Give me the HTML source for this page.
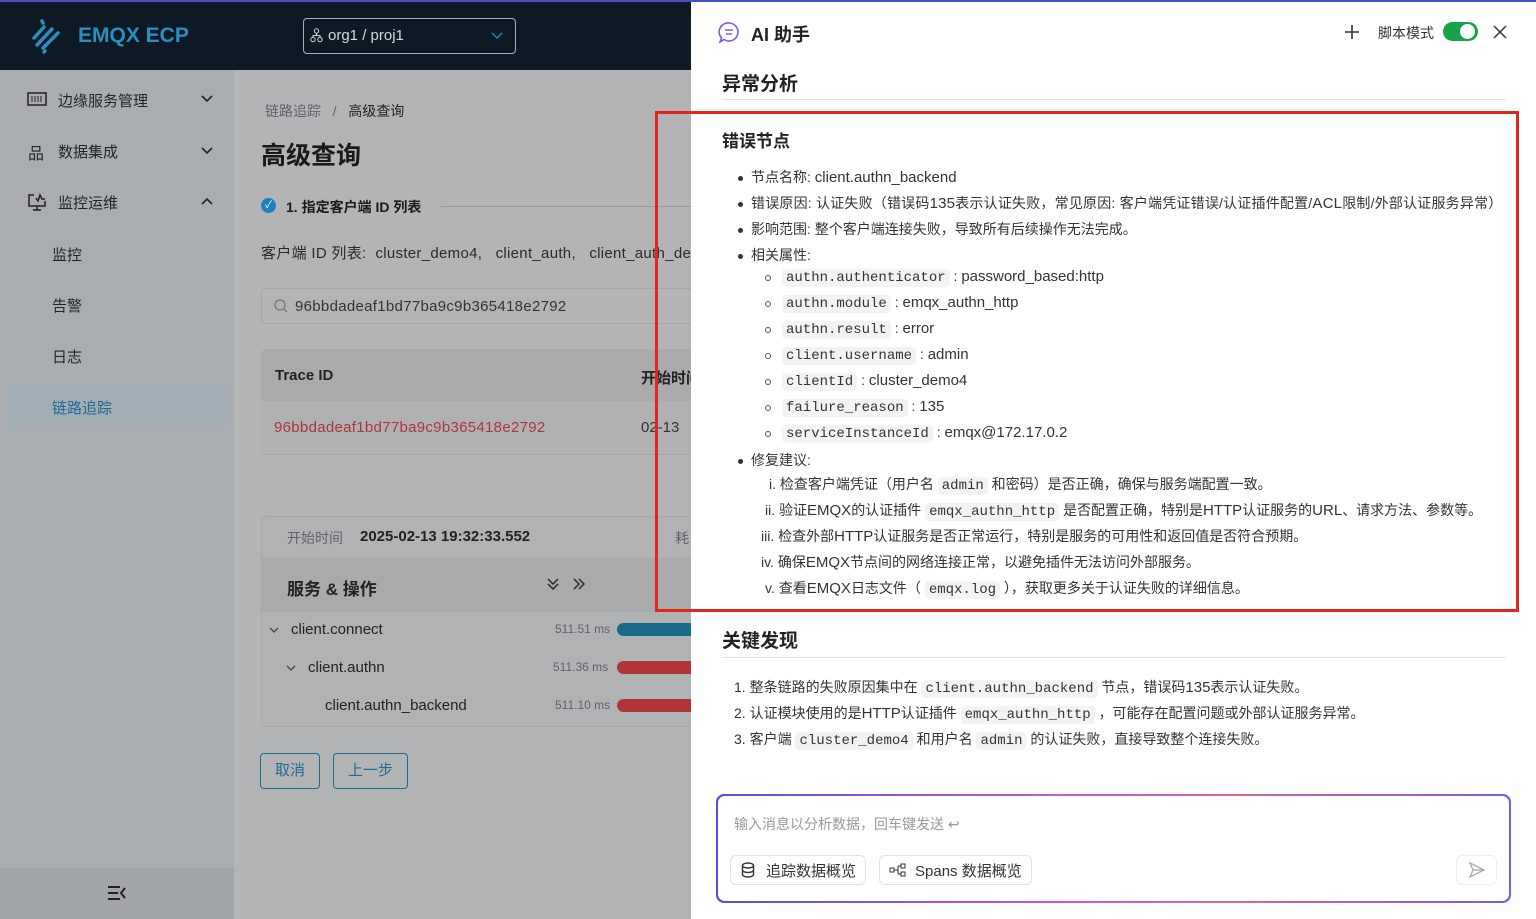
<!DOCTYPE html>
<html><head><meta charset="utf-8"><style>
*{margin:0;padding:0;box-sizing:border-box}
body{width:1536px;height:919px;overflow:hidden;position:relative;font-family:"Liberation Sans","Noto Sans CJK SC",sans-serif;background:#b3b4b6;color:#222}
.a{position:absolute;white-space:nowrap}
#topline{position:absolute;left:0;top:0;width:1536px;height:2px;background:#4a4fc4;z-index:5}
#hdr{position:absolute;left:0;top:0;width:691px;height:70px;background:#0d1a25}
#side{position:absolute;left:0;top:70px;width:234px;height:849px;background:#a9adb1}
#sidebot{position:absolute;left:0;top:868px;width:234px;height:51px;background:#a1a4a8}
.nav{font-size:15px;color:#1f2428}
.gray{color:#5f6367}
code,.c{font-family:"Liberation Mono","DejaVu Sans Mono",monospace;background:#f2f3f5;border-radius:4px;padding:1px 4px;font-size:14px;color:#333}
#panel{position:absolute;left:691px;top:0;width:845px;height:919px;background:#fff}
.t{font-size:14px;color:#333}
.l{font-size:15px}
.dot{position:absolute;width:5px;height:5px;border-radius:50%;background:#333}
.circ{position:absolute;width:6px;height:6px;border-radius:50%;border:1px solid #555}
#red{position:absolute;left:655px;top:111px;width:864px;height:501px;border:3px solid #e0261d;z-index:4}
</style></head><body>
<div id="topline"></div>
<div id="hdr">
 <svg class="a" style="left:30px;top:18px" width="34" height="36" viewBox="0 0 34 36"><g stroke="#2a8fc0" stroke-width="3.5" stroke-linecap="round"><line x1="12" y1="3" x2="13" y2="5"/><line x1="4" y1="20" x2="14" y2="9"/><line x1="7" y1="27" x2="22" y2="11"/><line x1="13" y1="30" x2="28" y2="15"/><line x1="14" y1="34" x2="15" y2="33"/></g></svg>
 <div class="a" style="left:78px;top:24px;font-size:21px;font-weight:bold;color:#2a8fc0">EMQX ECP</div>
 <div class="a" style="left:303px;top:18px;width:213px;height:36px;border:1px solid #aab;border-radius:4px"></div>
 <svg class="a" style="left:310px;top:28px" width="13" height="15"><circle cx="6.5" cy="3" r="2.2" stroke="#d5d8db" fill="none"/><circle cx="3" cy="11.5" r="2.2" stroke="#d5d8db" fill="none"/><circle cx="10" cy="11.5" r="2.2" stroke="#d5d8db" fill="none"/><path d="M6.5 5v3M3 9V7.5h7V9" stroke="#d5d8db" fill="none"/></svg>
 <div class="a" style="left:328px;top:27px;font-size:15px;color:#d5d8db">org1 / proj1</div>
 <svg class="a" style="left:491px;top:32px" width="12" height="8"><path d="M1 1 L6 6 L11 1" stroke="#2a8fc0" fill="none" stroke-width="1.3"/></svg>
</div>
<div id="side"></div><div id="sidebot"></div>
<svg class="a" style="left:27px;top:92px" width="20" height="15"><rect x="1" y="1" width="18" height="12" stroke="#222" fill="none" stroke-width="1.5"/><path d="M5 4v6M8 4v6M11 4v6M14 4v6" stroke="#222"/></svg>
<div class="a nav" style="left:58px;top:90px">边缘服务管理</div>
<div class="a nav" style="left:28px;top:140px;font-size:16px">&#x54C1;</div>
<div class="a nav" style="left:58px;top:141px">数据集成</div>
<svg class="a" style="left:27px;top:193px" width="20" height="18"><path d="M7 2H2v11h16V8M6 17h8M10 13v4M9 5l2 3 2-6 2 4h3" stroke="#222" fill="none" stroke-width="1.5"/></svg>
<div class="a nav" style="left:58px;top:192px">监控运维</div>
<svg class="a" style="left:201px;top:95px" width="12" height="8"><path d="M1 1l5 5 5-5" stroke="#222" fill="none" stroke-width="1.6"/></svg>
<svg class="a" style="left:201px;top:147px" width="12" height="8"><path d="M1 1l5 5 5-5" stroke="#222" fill="none" stroke-width="1.6"/></svg>
<svg class="a" style="left:201px;top:197px" width="12" height="8"><path d="M1 7l5-5 5 5" stroke="#222" fill="none" stroke-width="1.6"/></svg>
<div class="a nav" style="left:52px;top:244px">监控</div>
<div class="a nav" style="left:52px;top:295px">告警</div>
<div class="a nav" style="left:52px;top:346px">日志</div>
<div class="a" style="left:8px;top:383px;width:218px;height:45px;background:#a2adb5;border-radius:4px"></div>
<div class="a nav" style="left:52px;top:397px;color:#1e6c93">链路追踪</div>
<svg class="a" style="left:107px;top:885px" width="20" height="16"><path d="M1 2h12M1 8h10M1 14h12M18 3l-4 5 4 5" stroke="#222" fill="none" stroke-width="2"/></svg>

<div class="a gray" style="left:265px;top:101px;font-size:14px">链路追踪 &nbsp;&nbsp;/&nbsp;&nbsp; <span style="color:#222">高级查询</span></div>
<div class="a" style="left:261px;top:136px;font-size:25px;font-weight:bold;color:#1a1a1a">高级查询</div>
<div class="a" style="left:261px;top:198px;width:15px;height:15px;border-radius:50%;background:#1e7fbd;color:#fff;font-size:10px;text-align:center;line-height:15px">✓</div>
<div class="a" style="left:286px;top:197px;font-size:14px;font-weight:bold;color:#1a1a1a">1. 指定客户端 ID 列表</div>
<div class="a" style="left:441px;top:206px;width:250px;height:1px;background:#999"></div>
<div class="a" style="left:261px;top:242px;font-size:15px;color:#2a2a2a;letter-spacing:0.3px">客户端 ID 列表: &nbsp;cluster_demo4, &nbsp;&nbsp;client_auth, &nbsp;&nbsp;client_auth_de</div>
<div class="a" style="left:261px;top:288px;width:440px;height:36px;border:1px solid #a6a6a6;border-radius:4px;background:#b3b4b6"></div>
<svg class="a" style="left:274px;top:299px" width="14" height="14"><circle cx="6" cy="6" r="5" stroke="#777" fill="none" stroke-width="1.3"/><path d="M10 10l3 3" stroke="#777" stroke-width="1.3"/></svg>
<div class="a" style="left:295px;top:298px;font-size:15px;color:#333;letter-spacing:0.3px">96bbdadeaf1bd77ba9c9b365418e2792</div>
<div class="a" style="left:261px;top:349px;width:440px;height:52px;background:#a9aaac;border-radius:6px 0 0 0"></div>
<div class="a" style="left:261px;top:401px;width:440px;height:54px;background:#b0b1b3;border-bottom:1px solid #a5a5a5"></div>
<div class="a" style="left:275px;top:367px;font-size:15px;font-weight:bold;color:#222">Trace ID</div>
<div class="a" style="left:641px;top:367px;font-size:15px;font-weight:bold;color:#222">开始时间</div>
<div class="a" style="left:274px;top:419px;font-size:15px;color:#b0353a;letter-spacing:0.3px">96bbdadeaf1bd77ba9c9b365418e2792</div>
<div class="a" style="left:641px;top:419px;font-size:15px;color:#333">02-13</div>

<div class="a" style="left:261px;top:516px;width:440px;height:211px;border:1px solid #a8a8a8;border-radius:4px;background:#b1b2b4"></div>
<div class="a" style="left:262px;top:558px;width:430px;height:54px;background:#a9aaac"></div>
<div class="a gray" style="left:287px;top:528px;font-size:14px">开始时间</div>
<div class="a" style="left:360px;top:528px;font-size:15px;font-weight:bold;color:#222">2025-02-13 19:32:33.552</div>
<div class="a gray" style="left:675px;top:528px;font-size:14px">耗</div>
<div class="a" style="left:287px;top:575px;font-size:17px;font-weight:bold;color:#222">服务 &amp; 操作</div>
<svg class="a" style="left:546px;top:577px" width="14" height="14"><path d="M2 2l5 5 5-5M2 7l5 5 5-5" stroke="#222" fill="none" stroke-width="1.4"/></svg>
<svg class="a" style="left:572px;top:578px" width="14" height="12"><path d="M2 1l5 5-5 5M7 1l5 5-5 5" stroke="#222" fill="none" stroke-width="1.4"/></svg>
<svg class="a" style="left:269px;top:627px" width="10" height="7"><path d="M1 1l4 4 4-4" stroke="#444" fill="none" stroke-width="1.3"/></svg>
<div class="a" style="left:291px;top:621px;font-size:15px;color:#222">client.connect</div>
<svg class="a" style="left:286px;top:665px" width="10" height="7"><path d="M1 1l4 4 4-4" stroke="#444" fill="none" stroke-width="1.3"/></svg>
<div class="a" style="left:308px;top:659px;font-size:15px;color:#222">client.authn</div>
<div class="a" style="left:325px;top:697px;font-size:15px;color:#222">client.authn_backend</div>
<div class="a gray" style="left:555px;top:622px;font-size:12px">511.51 ms</div>
<div class="a gray" style="left:553px;top:660px;font-size:12px">511.36 ms</div>
<div class="a gray" style="left:555px;top:698px;font-size:12px">511.10 ms</div>
<div class="a" style="left:617px;top:623px;width:80px;height:13px;border-radius:7px 0 0 7px;background:#186a88"></div>
<div class="a" style="left:617px;top:661px;width:80px;height:13px;border-radius:7px 0 0 7px;background:#b03538"></div>
<div class="a" style="left:617px;top:699px;width:80px;height:13px;border-radius:7px 0 0 7px;background:#b03538"></div>
<div class="a" style="left:260px;top:753px;width:60px;height:36px;border:1px solid #1e6c93;border-radius:4px;font-size:15px;color:#1e6c93;text-align:center;line-height:34px">取消</div>
<div class="a" style="left:333px;top:753px;width:75px;height:36px;border:1px solid #1e6c93;border-radius:4px;font-size:15px;color:#1e6c93;text-align:center;line-height:34px">上一步</div>

<div id="panel">
 <svg class="a" style="left:27px;top:21px" width="22" height="22"><path d="M11 2a9 9 0 1 1-5 16.5L2 21l1.5-4A9 9 0 0 1 11 2z" stroke="#7a5cf0" fill="none" stroke-width="1.6"/><path d="M7 9h8M8 13h6" stroke="#7a5cf0" stroke-width="1.6"/></svg>
 <div class="a" style="left:60px;top:21px;font-size:18px;font-weight:bold;color:#222">AI 助手</div>
 <svg class="a" style="left:653px;top:24px" width="16" height="16"><path d="M8 1v14M1 8h14" stroke="#333" stroke-width="1.6"/></svg>
 <div class="a" style="left:687px;top:23px;font-size:14px;color:#333">脚本模式</div>
 <div class="a" style="left:752px;top:22px;width:35px;height:19px;border-radius:10px;background:#17a34a"></div>
 <div class="a" style="left:769px;top:24px;width:15px;height:15px;border-radius:50%;background:#fff"></div>
 <svg class="a" style="left:802px;top:25px" width="14" height="14"><path d="M1 1l12 12M13 1L1 13" stroke="#333" stroke-width="1.5"/></svg>
 <div class="a" style="left:31px;top:69px;font-size:19px;font-weight:bold;color:#222">异常分析</div>
 <div class="a" style="left:31px;top:99px;width:784px;height:1px;background:#e3e3e3"></div>
 <div class="a" style="left:31px;top:127px;font-size:17px;font-weight:bold;color:#222">错误节点</div>
 <div class="dot" style="left:47px;top:176px"></div><div class="a t" style="left:60px;top:167px">节点名称: <span class="l">client.authn_backend</span></div>
 <div class="dot" style="left:47px;top:202px"></div><div class="a t" style="left:60px;top:193px;letter-spacing:0.2px">错误原因: 认证失败（错误码<span class="l">135</span>表示认证失败，常见原因: 客户端凭证错误/认证插件配置/<span class="l">ACL</span>限制/外部认证服务异常）</div>
 <div class="dot" style="left:47px;top:228px"></div><div class="a t" style="left:60px;top:219px">影响范围: 整个客户端连接失败，导致所有后续操作无法完成。</div>
 <div class="dot" style="left:47px;top:254px"></div><div class="a t" style="left:60px;top:245px">相关属性:</div>
 <div class="circ" style="left:74px;top:275px"></div><div class="a t" style="left:91px;top:268px"><code>authn.authenticator</code> : <span class="l">password_based:http</span></div>
 <div class="circ" style="left:74px;top:301px"></div><div class="a t" style="left:91px;top:294px"><code>authn.module</code> : <span class="l">emqx_authn_http</span></div>
 <div class="circ" style="left:74px;top:327px"></div><div class="a t" style="left:91px;top:320px"><code>authn.result</code> : <span class="l">error</span></div>
 <div class="circ" style="left:74px;top:353px"></div><div class="a t" style="left:91px;top:346px"><code>client.username</code> : <span class="l">admin</span></div>
 <div class="circ" style="left:74px;top:379px"></div><div class="a t" style="left:91px;top:372px"><code>clientId</code> : <span class="l">cluster_demo4</span></div>
 <div class="circ" style="left:74px;top:405px"></div><div class="a t" style="left:91px;top:398px"><code>failure_reason</code> : <span class="l">135</span></div>
 <div class="circ" style="left:74px;top:431px"></div><div class="a t" style="left:91px;top:424px"><code>serviceInstanceId</code> : <span class="l">emqx@172.17.0.2</span></div>
 <div class="dot" style="left:47px;top:459px"></div><div class="a t" style="left:60px;top:450px">修复建议:</div>
 <div class="a t" style="left:78px;top:474px">i. 检查客户端凭证（用户名 <code>admin</code> 和密码）是否正确，确保与服务端配置一致。</div>
 <div class="a t" style="left:74px;top:500px">ii. 验证<span class="l">EMQX</span>的认证插件 <code>emqx_authn_http</code> 是否配置正确，特别是<span class="l">HTTP</span>认证服务的<span class="l">URL</span>、请求方法、参数等。</div>
 <div class="a t" style="left:70px;top:526px">iii. 检查外部<span class="l">HTTP</span>认证服务是否正常运行，特别是服务的可用性和返回值是否符合预期。</div>
 <div class="a t" style="left:70px;top:552px">iv. 确保<span class="l">EMQX</span>节点间的网络连接正常，以避免插件无法访问外部服务。</div>
 <div class="a t" style="left:74px;top:578px">v. 查看<span class="l">EMQX</span>日志文件（ <code>emqx.log</code> ），获取更多关于认证失败的详细信息。</div>
 <div class="a" style="left:31px;top:626px;font-size:19px;font-weight:bold;color:#222">关键发现</div>
 <div class="a" style="left:31px;top:657px;width:784px;height:1px;background:#e3e3e3"></div>
 <div class="a t" style="left:43px;top:677px">1. 整条链路的失败原因集中在 <code>client.authn_backend</code> 节点，错误码<span class="l">135</span>表示认证失败。</div>
 <div class="a t" style="left:43px;top:703px">2. 认证模块使用的是<span class="l">HTTP</span>认证插件 <code>emqx_authn_http</code> ，可能存在配置问题或外部认证服务异常。</div>
 <div class="a t" style="left:43px;top:729px">3. 客户端 <code>cluster_demo4</code> 和用户名 <code>admin</code> 的认证失败，直接导致整个连接失败。</div>
 <div class="a" style="left:25px;top:794px;width:795px;height:109px;border-radius:8px;background:linear-gradient(90deg,#5b4fd6,#c85ad8 45%,#e0609a 65%,#7a5ce0)"></div>
 <div class="a" style="left:27px;top:796px;width:791px;height:105px;border-radius:7px;background:#fff"></div>
 <div class="a" style="left:43px;top:814px;font-size:14px;color:#999">输入消息以分析数据，回车键发送 ↩</div>
 <div class="a" style="left:39px;top:855px;width:136px;height:30px;border:1px solid #e3e3e3;border-radius:6px"></div>
 <svg class="a" style="left:50px;top:862px" width="14" height="16"><ellipse cx="7" cy="3.5" rx="5.5" ry="2.5" stroke="#333" fill="none" stroke-width="1.4"/><path d="M1.5 3.5v9c0 1.4 2.5 2.5 5.5 2.5s5.5-1.1 5.5-2.5v-9M1.5 8c0 1.4 2.5 2.5 5.5 2.5s5.5-1.1 5.5-2.5" stroke="#333" fill="none" stroke-width="1.4"/></svg>
 <div class="a" style="left:75px;top:860px;font-size:15px;color:#333">追踪数据概览</div>
 <div class="a" style="left:188px;top:855px;width:153px;height:30px;border:1px solid #e3e3e3;border-radius:6px"></div>
 <svg class="a" style="left:198px;top:863px" width="18" height="14"><rect x="1" y="5" width="4" height="4" stroke="#333" fill="none"/><rect x="12" y="1" width="4" height="4" stroke="#333" fill="none"/><rect x="12" y="9" width="4" height="4" stroke="#333" fill="none"/><path d="M5 7h4M9 3v8M9 3h3M9 11h3" stroke="#333" fill="none"/></svg>
 <div class="a" style="left:224px;top:860px;font-size:15px;color:#333">Spans 数据概览</div>
 <div class="a" style="left:765px;top:855px;width:41px;height:30px;border:1px solid #eee;border-radius:6px"></div>
 <svg class="a" style="left:777px;top:861px" width="18" height="18"><path d="M2 2l14 7-14 7 3-7z" stroke="#aaa" fill="none" stroke-width="1.3"/><path d="M5 9h11" stroke="#aaa" stroke-width="1.3"/></svg>
</div>
<div id="red"></div>
</body></html>
